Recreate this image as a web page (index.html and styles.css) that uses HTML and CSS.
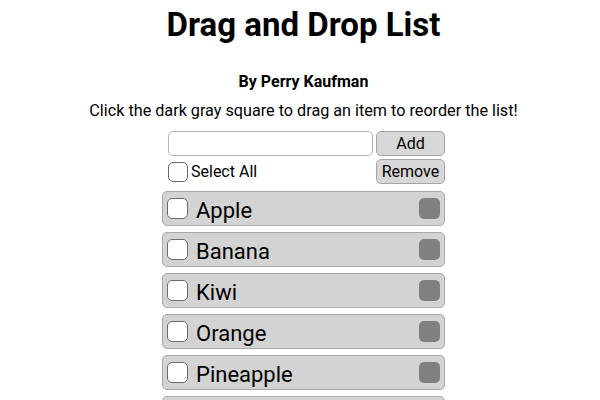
FILE: index.html
```html
<!DOCTYPE html>
<html>
<head>
<meta charset="utf-8">
<link rel="stylesheet" href="styles.css">
</head>
<body>
<h1 class="title">Drag and Drop List</h1>
<h4 class="author">By Perry Kaufman</h4>
<p class="hint">Click the dark gray square to drag an item to reorder the list!</p>
<div class="wrap">
  <div class="controls">
    <div class="row">
      <input class="field" type="text">
      <button class="btn">Add</button>
    </div>
    <div class="row">
      <label class="select-all"><input class="check" type="checkbox"><span>Select All</span></label>
      <button class="btn">Remove</button>
    </div>
  </div>
  <ul class="list">
    <li class="item"><input class="check big" type="checkbox"><span class="name">Apple</span><span class="handle"></span></li>
    <li class="item"><input class="check big" type="checkbox"><span class="name">Banana</span><span class="handle"></span></li>
    <li class="item"><input class="check big" type="checkbox"><span class="name">Kiwi</span><span class="handle"></span></li>
    <li class="item"><input class="check big" type="checkbox"><span class="name">Orange</span><span class="handle"></span></li>
    <li class="item"><input class="check big" type="checkbox"><span class="name">Pineapple</span><span class="handle"></span></li>
    <li class="item"><input class="check big" type="checkbox"><span class="name">Strawberry</span><span class="handle"></span></li>
  </ul>
</div>
</body>
</html>
```
FILE: styles.css
```css
html, body {
  margin: 0;
  background: #fff;
}
body {
  padding: 0 0 0 7px;
  font-family: Roboto, "Liberation Sans", sans-serif;
  color: #000;
  overflow: hidden;
}
.title {
  margin: 0;
  padding-top: 6px;
  font-size: 33px;
  font-weight: 700;
  text-align: center;
  line-height: 38px;
}
.author {
  margin: 28px 0 0;
  font-size: 16px;
  font-weight: 700;
  text-align: center;
  line-height: 19px;
}
.hint {
  margin: 10px 0 0;
  font-size: 16.2px;
  text-align: center;
  line-height: 19px;
}
.wrap {
  width: 283px;
  margin: 11px auto 0;
}
.controls {
  padding-left: 6px;
  display: flex;
  flex-direction: column;
  gap: 3px;
}
.row {
  display: flex;
  justify-content: space-between;
  align-items: center;
}
.field {
  box-sizing: border-box;
  width: 205px;
  height: 25px;
  border: 1px solid #b4b4b4;
  border-radius: 5px;
  margin: 0;
  padding: 0 4px;
  background: #fff;
}
.btn {
  box-sizing: border-box;
  width: 69px;
  height: 25px;
  margin: 0;
  padding: 0;
  border: 1px solid #a5a5a5;
  border-radius: 5px;
  background: #d7d7d7;
  font-family: Roboto, "Liberation Sans", sans-serif;
  font-size: 16px;
  color: #000;
}
.select-all {
  display: flex;
  align-items: center;
  font-size: 16px;
}
.check {
  -webkit-appearance: none;
  appearance: none;
  box-sizing: border-box;
  width: 20px;
  height: 20px;
  margin: 0 3px 0 0;
  border: 1px solid #6b6b6b;
  border-radius: 5px;
  background: #fff;
}
.list {
  list-style: none;
  margin: 7px 0 0;
  padding: 0;
  display: flex;
  flex-direction: column;
  gap: 6px;
}
.item {
  box-sizing: border-box;
  height: 35px;
  display: flex;
  align-items: center;
  padding: 0 4px;
  border: 1px solid #a8a8a8;
  border-radius: 5px;
  background: #d3d3d3;
}
.check.big {
  width: 21px;
  height: 21px;
  margin: 0 8px 0 0;
}
.name {
  flex: 1;
  font-size: 22px;
  padding-top: 3px;
}
.handle {
  width: 21px;
  height: 21px;
  border-radius: 5px;
  background: #808080;
}
```
